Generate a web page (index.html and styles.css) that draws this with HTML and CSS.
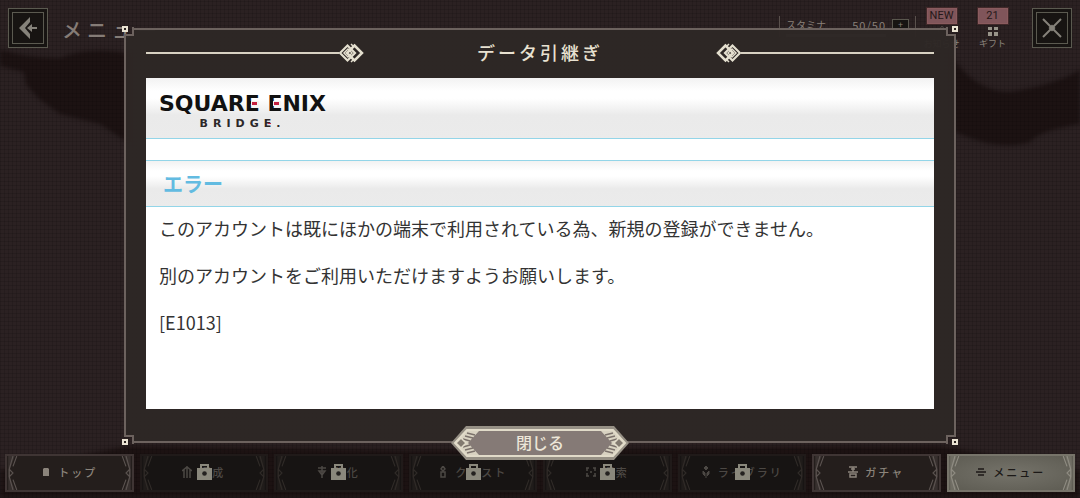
FILE: index.html
```html
<!DOCTYPE html>
<html lang="ja">
<head>
    <meta charset="UTF-8">
    <meta name="viewport" content="width=device-width, initial-scale=1.0">
    <title>データ引継ぎ</title>
    <link rel="stylesheet" href="styles.css">
</head>
<body>
    <!-- 共通アイコン -->
    <svg class="defs" width="0" height="0" aria-hidden="true">
        <symbol id="lock" viewBox="0 0 15 16">
            <path d="M3 0h9v4h3v12H0V4h3zM5 2v2h5V2z" fill="#8a887c" fill-rule="evenodd"/>
            <circle cx="7.500" cy="9.500" r="2.300" fill="#23211f"/>
        </symbol>
        <symbol id="side" viewBox="0 0 10 36">
            <path d="M0 0h7L2 13v10l5 13H0z" fill="currentColor" opacity=".35"/>
            <path d="M5 0L1 14l4 4-4 4 4 14M9 0L5 11M9 36L5 25M1 14v8" fill="none" stroke="currentColor" stroke-width="1.200"/>
        </symbol>
        <symbol id="diamond" viewBox="0 0 26 20">
            <path d="M8.500 2.500L16 10l-7.500 7.500L1 10z" fill="none" stroke="#e4dfcf" stroke-width="2.200"/>
            <path d="M9 6l4 4-4 4-4-4z" fill="none" stroke="#e4dfcf" stroke-width="1.500"/>
            <path d="M15.500 2.500L23 10l-7.500 7.500L8 10z" fill="none" stroke="#e4dfcf" stroke-width="2.500"/>
            <path d="M12 1l3 3M12 19l3-3" stroke="#e4dfcf" stroke-width="1.500"/>
        </symbol>
        <symbol id="corner" viewBox="0 0 13 12">
            <path d="M4 12V10H12V3H13" fill="none" stroke="#6c625e" stroke-width="2"/>
            <path d="M1 1h6v6H1z" fill="#e9e2d2"/>
            <path d="M3 3h2v2H3z" fill="#2a2320"/>
        </symbol>
        <symbol id="cap" viewBox="0 0 30 34">
            <path d="M0 17L15 0h15v34H15z" fill="#969085"/>
            <path d="M5 17L17 3h13v28H17z" fill="#857a76"/>
            <path d="M15 5h13L17 17l11 12H15L4 17z" fill="#d8d2c1"/>
            <path d="M16 7l8 2M14 10l8 2M12 13l7 2M16 27l8-2M14 24l8-2M12 21l7-2" stroke="#7b716b" stroke-width="1.500"/>
            <path d="M30 4H16L4 17l12 13h14" fill="none" stroke="#e1dbc9" stroke-width="2"/>
            <path d="M10 12l5 5-5 5-5-5z" fill="#827a70" stroke="#e1dbc9" stroke-width="1.500"/>
        </symbol>
    </svg>

    <div class="screen">
        <svg class="backdrop" viewBox="0 0 1080 498" preserveAspectRatio="none" aria-hidden="true">
            <path d="M0 50Q30 58 60 58 90 46 130 54V144L100 124 60 114 38 98 26 84 24 72 0 66z"/>
            <path d="M950 54Q975 92 1010 92 1055 85 1080 70V124Q1040 130 1030 142 1000 152 955 132z"/>
            <path d="M0 470L130 446 400 450 940 446 1080 470V498H0z"/>
        </svg>

        <header class="topbar">
            <button class="square-button" type="button" aria-label="戻る">
                <svg width="20" height="24" viewBox="0 0 20 24"><path d="M12 1v5L7 12l5 6v5L1 12z" fill="#85827a"/><path d="M9 12l5-4v3h5v2h-5v3z" fill="#85827a"/></svg>
            </button>
            <h1 class="page-title">メニュー</h1>
            <div class="stamina">
                <div class="stamina-row">
                    <span>スタミナ</span>
                    <span class="stamina-value">50/50</span>
                    <button class="plus-button" type="button" aria-label="スタミナ回復">+</button>
                </div>
                <div class="stamina-bar"></div>
            </div>
            <a class="shortcut" href="#news">
                <span class="badge">NEW</span>
                <svg width="12" height="12" viewBox="0 0 12 12"><path d="M6 1l4 5-4 5-4-5z" fill="none" stroke="#4a4340"/></svg>
                <span class="shortcut-label">お知らせ</span>
            </a>
            <a class="shortcut" href="#gift">
                <span class="badge">21</span>
                <svg width="12" height="12" viewBox="0 0 12 12"><path d="M1 2h4v3H1zM7 2h4v3H7zM1 7h4v4H1zM7 7h4v4H7z" fill="#98948a"/></svg>
                <span class="shortcut-label">ギフト</span>
            </a>
            <button class="square-button close" type="button" aria-label="メニューを閉じる">
                <svg width="20" height="20" viewBox="0 0 20 20"><path d="M1 1l18 18M19 1L1 19" stroke="#85827a" stroke-width="2"/><path d="M10 6.500l3.500 3.500-3.500 3.500L6.500 10z" fill="#85827a"/></svg>
            </button>
        </header>

        <nav class="tabs">
            <a class="tab" href="#top">
                <svg class="side"><use href="#side"/></svg>
                <svg class="tab-icon" viewBox="0 0 10 12"><path d="M3 2h4l1 1v7H2V3z" fill="currentColor"/></svg>
                <span>トップ</span>
                <svg class="side right"><use href="#side"/></svg>
            </a>
            <a class="tab locked" href="#party">
                <svg class="side"><use href="#side"/></svg>
                <svg class="tab-icon" viewBox="0 0 10 12"><path d="M5 0v12M2 3v9M8 3v9M0 5l5-4 5 4" fill="none" stroke="currentColor" stroke-width="1.500"/></svg>
                <span>編成</span>
                <svg class="lock"><use href="#lock"/></svg>
                <svg class="side right"><use href="#side"/></svg>
            </a>
            <a class="tab locked" href="#enhance">
                <svg class="side"><use href="#side"/></svg>
                <svg class="tab-icon" viewBox="0 0 10 12"><path d="M1 2h8M5 0v12M2 5h6L5 9z" fill="none" stroke="currentColor" stroke-width="1.500"/></svg>
                <span>強化</span>
                <svg class="lock"><use href="#lock"/></svg>
                <svg class="side right"><use href="#side"/></svg>
            </a>
            <a class="tab locked" href="#quest">
                <svg class="side"><use href="#side"/></svg>
                <svg class="tab-icon" viewBox="0 0 10 12"><path d="M5 0l2 3-2 2-2-2zM3 6h4v5H3z" fill="none" stroke="currentColor" stroke-width="1.500"/></svg>
                <span>クエスト</span>
                <svg class="lock"><use href="#lock"/></svg>
                <svg class="side right"><use href="#side"/></svg>
            </a>
            <a class="tab locked" href="#search">
                <svg class="side"><use href="#side"/></svg>
                <svg class="tab-icon" viewBox="0 0 10 12"><path d="M0 2h3M7 2h3M0 10h3M7 10h3M1 2v3M9 2v3M1 7v3M9 7v3M4 6h2" fill="none" stroke="currentColor" stroke-width="1.500"/></svg>
                <span>探索</span>
                <svg class="lock"><use href="#lock"/></svg>
                <svg class="side right"><use href="#side"/></svg>
            </a>
            <a class="tab locked" href="#library">
                <svg class="side"><use href="#side"/></svg>
                <svg class="tab-icon" viewBox="0 0 10 12"><path d="M5 0l2 2-2 2-2-2zM2 5l2 2v3l-2-2zM8 5L6 7v3l2-2zM4 11h2" fill="currentColor" stroke="currentColor"/></svg>
                <span>ライブラリ</span>
                <svg class="lock"><use href="#lock"/></svg>
                <svg class="side right"><use href="#side"/></svg>
            </a>
            <a class="tab" href="#gacha">
                <svg class="side"><use href="#side"/></svg>
                <svg class="tab-icon" viewBox="0 0 10 12"><path d="M1 1h8M3 3h4M5 1v5M0 6h10M2 8h6v3H2z" fill="none" stroke="currentColor" stroke-width="1.500"/></svg>
                <span>ガチャ</span>
                <svg class="side right"><use href="#side"/></svg>
            </a>
            <a class="tab active" href="#menu">
                <svg class="side"><use href="#side"/></svg>
                <svg class="tab-icon" viewBox="0 0 10 12"><path d="M2 3h6M0 6h10M2 9h6" stroke="currentColor" stroke-width="1.500"/></svg>
                <span>メニュー</span>
                <svg class="side right"><use href="#side"/></svg>
            </a>
        </nav>

        <div class="overlay">
            <section class="modal" role="dialog" aria-labelledby="modal-title">
                <svg class="corner top-left"><use href="#corner"/></svg>
                <svg class="corner top-right"><use href="#corner"/></svg>
                <svg class="corner bottom-left"><use href="#corner"/></svg>
                <svg class="corner bottom-right"><use href="#corner"/></svg>

                <div class="modal-header">
                    <div class="rule">
                        <span class="line"></span>
                        <svg class="diamond"><use href="#diamond"/></svg>
                    </div>
                    <h2 class="modal-title" id="modal-title">データ引継ぎ</h2>
                    <div class="rule flip">
                        <span class="line"></span>
                        <svg class="diamond"><use href="#diamond"/></svg>
                    </div>
                </div>

                <div class="webview">
                    <div class="band brand">
                        <div class="logo">
                            <div class="logo-main">SQUAR<span class="red-e">E</span> <span class="red-e">E</span>NIX</div>
                            <div class="logo-sub">BRIDG<span class="red-e">E</span>.</div>
                        </div>
                    </div>
                    <div class="band error-title">
                        <h3>エラー</h3>
                    </div>
                    <div class="message">
                        <p>このアカウントは既にほかの端末で利用されている為、新規の登録ができません。</p>
                        <p>別のアカウントをご利用いただけますようお願いします。</p>
                        <p>[E1013]</p>
                    </div>
                </div>

                <button class="close-button" type="button">
                    <svg class="cap"><use href="#cap"/></svg>
                    <span class="close-label">閉じる</span>
                    <svg class="cap right"><use href="#cap"/></svg>
                </button>
            </section>
        </div>
    </div>
</body>
</html>
```

FILE: styles.css
```css
* {
    margin: 0;
    padding: 0;
    box-sizing: border-box;
}

body {
    font-family: 'Noto Sans CJK JP', 'Noto Sans', sans-serif;
    background: #2b2122;
    color: #333;
}

a {
    color: inherit;
    text-decoration: none;
}

button {
    font-family: inherit;
    border: none;
    background: none;
    cursor: pointer;
}

svg {
    display: block;
    flex: none;
}

.defs {
    position: absolute;
}

.screen {
    position: relative;
    display: flex;
    flex-direction: column;
    justify-content: space-between;
    min-height: 100vh;
    overflow: hidden;
    background: #2b2122;
}

/* 背景の模様 */
.backdrop {
    position: absolute;
    width: 100%;
    height: 100%;
    fill: #1c1212;
    filter: blur(2px);
}

.screen::before {
    content: "";
    position: absolute;
    inset: 0;
    z-index: 1;
    background:
        repeating-linear-gradient(0deg, rgba(0, 0, 0, 0.12) 0 1px, transparent 1px 4px),
        repeating-linear-gradient(90deg, rgba(0, 0, 0, 0.12) 0 1px, transparent 1px 4px);
}

/* 上部バー */
.topbar {
    position: relative;
    z-index: 2;
    display: flex;
    align-items: flex-start;
    padding: 8px;
}

.square-button {
    display: flex;
    align-items: center;
    justify-content: center;
    width: 40px;
    height: 40px;
    background: #171412;
    border: 1px solid #5b5a50;
    outline: 1px solid #5b5a50;
    outline-offset: -5px;
}

.square-button.close {
    margin-left: 18px;
}

.page-title {
    margin-left: 14px;
    font-size: 20px;
    font-weight: 500;
    line-height: 43px;
    letter-spacing: 5px;
    color: #857c77;
}

.stamina {
    margin: 8px 4px 0 auto;
    width: 137px;
    padding: 0 6px;
    border-left: 1px solid #5a514d;
    border-right: 1px solid #5a514d;
    color: #898079;
}

.stamina-row {
    display: flex;
    align-items: center;
    justify-content: space-between;
    font-size: 10px;
    line-height: 18px;
}

.stamina-value {
    margin-left: auto;
    font-size: 11px;
    letter-spacing: 1px;
}

.plus-button {
    width: 17px;
    height: 12px;
    margin-left: 6px;
    border: 1px solid #5a574e;
    background: #171412;
    color: #898079;
    font-size: 9px;
    line-height: 10px;
}

.stamina-bar {
    width: 100px;
    height: 3px;
    background: #6a625b;
}

.shortcut {
    display: flex;
    flex-direction: column;
    align-items: center;
    width: 43px;
    color: #8b857d;
}

.shortcut + .shortcut {
    margin-left: 8px;
}

.badge {
    min-width: 30px;
    margin-bottom: 1px;
    border: 1px solid #8a5b5e;
    outline: 1px solid #41292a;
    background: #80555a;
    color: #251819;
    font-family: Roboto, sans-serif;
    font-size: 11px;
    line-height: 14px;
    text-align: center;
}

.shortcut-label {
    font-size: 9px;
    line-height: 13px;
    white-space: nowrap;
}

/* 下部タブ */
.tabs {
    position: relative;
    z-index: 2;
    display: grid;
    grid-template-columns: repeat(8, 1fr);
    gap: 6px;
    padding: 0 5px 6px;
}

.tab {
    position: relative;
    display: flex;
    align-items: center;
    justify-content: center;
    gap: 7px;
    height: 38px;
    padding-bottom: 2px;
    border: 2px solid #3f3534;
    background: #241e1c;
    color: #8b847b;
    font-size: 11px;
    font-weight: 500;
    letter-spacing: 2px;
}

.tab-icon {
    width: 10px;
    height: 12px;
}

.side {
    position: absolute;
    left: 1px;
    top: 0;
    width: 10px;
    height: 34px;
    color: #5b5350;
}

.side.right {
    left: auto;
    right: 1px;
    transform: scaleX(-1);
}

.tab.locked {
    border-color: #201a19;
    background: #171413;
    color: #4c4844;
}

.tab.locked .side {
    color: #302b28;
}

.lock {
    position: absolute;
    left: 50%;
    top: 8px;
    width: 15px;
    height: 16px;
    margin-left: -7px;
}

.tab.active {
    border-color: #77746a;
    background: radial-gradient(ellipse at center, #75736a, #5d5b52);
    color: #1c1917;
}

.tab.active .side {
    color: #8f8c82;
}

/* ダイアログ */
.overlay {
    position: absolute;
    inset: 0;
    z-index: 3;
    display: flex;
    padding: 28px 124px 55px;
}

.modal {
    position: relative;
    display: flex;
    flex: 1;
    flex-direction: column;
    padding: 0 22px 34px;
    background:
        linear-gradient(#6c625e, #6c625e) 9px 0 / calc(100% - 18px) 2px no-repeat,
        linear-gradient(#6c625e, #6c625e) 9px 100% / calc(100% - 18px) 2px no-repeat,
        linear-gradient(#6c625e, #6c625e) 0 8px / 2px calc(100% - 16px) no-repeat,
        linear-gradient(#6c625e, #6c625e) 100% 8px / 2px calc(100% - 16px) no-repeat;
}

.modal::before {
    content: "";
    position: absolute;
    inset: 1px;
    z-index: -1;
    background: rgba(45, 39, 37, 0.97);
    clip-path: polygon(8px 0, calc(100% - 8px) 0, calc(100% - 8px) 7px, 100% 7px, 100% calc(100% - 7px), calc(100% - 8px) calc(100% - 7px), calc(100% - 8px) 100%, 8px 100%, 8px calc(100% - 7px), 0 calc(100% - 7px), 0 7px, 8px 7px);
}

.corner {
    position: absolute;
    width: 13px;
    height: 12px;
}

.top-left {
    left: -3px;
    top: -3px;
}

.top-right {
    right: -3px;
    top: -3px;
    transform: scaleX(-1);
}

.bottom-left {
    left: -3px;
    bottom: -3px;
    transform: scaleY(-1);
}

.bottom-right {
    right: -3px;
    bottom: -3px;
    transform: scale(-1);
}

.modal-header {
    display: flex;
    align-items: center;
    justify-content: space-between;
    height: 50px;
}

.rule {
    display: flex;
    align-items: center;
    width: 219px;
}

.rule.flip {
    transform: scaleX(-1);
}

.line {
    flex: 1;
    height: 2px;
    background: #d8d2c3;
}

.diamond {
    width: 26px;
    height: 20px;
}

.modal-title {
    padding-bottom: 3px;
    font-size: 18px;
    font-weight: 500;
    letter-spacing: 3px;
    color: #e8e1d1;
}

.webview {
    flex: 1;
    background: #fff;
}

.band {
    border-bottom: 1px solid #93d5e8;
    background: linear-gradient(#f2f2f2 0%, #fff 22%, #fff 34%, #eaeaea 62%, #ebebeb 100%);
}

.brand {
    padding: 14px 13px 6px;
    margin-bottom: 21px;
}

.logo {
    width: fit-content;
    text-align: center;
    font-family: 'DejaVu Sans', sans-serif;
    font-weight: 700;
    color: #111;
}

.logo-main {
    font-size: 22px;
    line-height: 24px;
}

.logo-sub {
    font-size: 11px;
    line-height: 16px;
    letter-spacing: 5px;
    color: #2c2829;
}

.red-e {
    position: relative;
}

/* Eの中央の赤い棒 */
.red-e::after {
    content: "";
    position: absolute;
    left: 7px;
    top: 11px;
    width: 5px;
    height: 3px;
    background: #c4203f;
    box-shadow: 0 0 0 1px #f2f2f2, 1px 0 0 1px #f2f2f2;
}

.logo-sub .red-e::after {
    left: 4px;
    top: 6px;
    width: 3px;
    height: 1px;
    box-shadow: none;
}

.error-title {
    border-top: 1px solid #93d5e8;
    padding: 9px 17px 8px;
}

.error-title h3 {
    font-size: 20px;
    line-height: 28px;
    font-weight: 700;
    color: #62bbe1;
}

.message {
    padding: 10px 13px;
    font-size: 18px;
    line-height: 23px;
}

.message p {
    margin-bottom: 24px;
}

.close-button {
    position: absolute;
    left: 50%;
    bottom: -17px;
    display: flex;
    transform: translateX(-50%);
}

.cap {
    width: 30px;
    height: 34px;
}

.cap.right {
    transform: scaleX(-1);
}

.close-label {
    width: 118px;
    background: linear-gradient(#969085 0 3px, #e1dbc9 3px 5px, #857a76 5px 29px, #e1dbc9 29px 31px, #969085 31px);
    font-size: 16px;
    font-weight: 500;
    line-height: 32px;
    color: #ece6d8;
}
```
